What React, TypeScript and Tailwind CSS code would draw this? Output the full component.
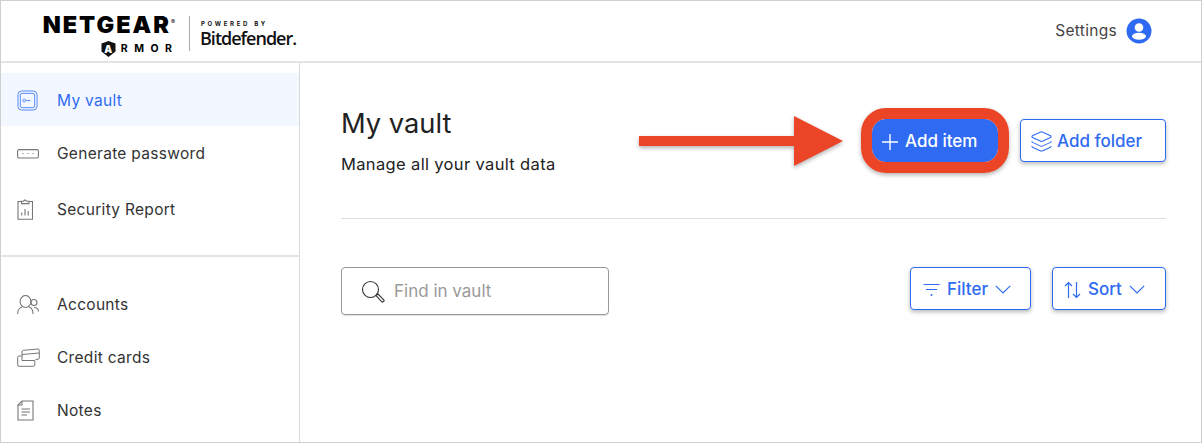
import { Layers } from 'lucide-react';
import type { ReactNode } from 'react';

const sans = "font-['Inter',sans-serif]";

function VaultIcon() {
  return (
    <svg width="21" height="21" viewBox="0 0 22 22" fill="none" stroke="#4f85f5">
      <rect x="1" y="1" width="20" height="20" rx="4" strokeWidth="1" />
      <rect x="3.5" y="3.5" width="15" height="15" rx="2" strokeWidth="1" />
      <circle cx="7.5" cy="11" r="1.5" strokeWidth="0.9" />
      <path d="M9 11h5M12.5 11v1" strokeWidth="0.9" />
    </svg>
  );
}

function PasswordIcon() {
  return (
    <svg width="22" height="10" viewBox="0 0 22 10" fill="none" stroke="#777">
      <rect x="0.6" y="0.6" width="20.8" height="8.4" rx="1.5" strokeWidth="1.1" />
      <path d="M5.5 4.5h1M10.5 4.5h1M15.5 4.5h1" strokeWidth="1.1" />
    </svg>
  );
}

function ReportIcon() {
  return (
    <svg width="16" height="21" viewBox="0 0 16 21" fill="none" stroke="#777" strokeWidth="1.1">
      <path d="M4.5 2.5H1v17.8h14.5V2.5H12" />
      <path d="M4.5 4.6V2.2h2l1.2-1.2h.6l1.2 1.2H12v2.4z" />
      <path d="M4.8 16.5v-3M8 16.5V10M11.2 16.5v-4.5" />
    </svg>
  );
}

function AccountsIcon() {
  return (
    <svg width="22" height="20" viewBox="0 0 22 20" fill="none" stroke="#777" strokeWidth="1.1">
      <ellipse cx="8.5" cy="6.5" rx="5.4" ry="6" />
      <path d="M0.6 19c0-4 2.5-6.5 4.6-7M11.8 12c2.2.5 4.2 3 4.2 7" />
      <circle cx="17" cy="7.5" r="3" />
      <path d="M17 12.5c2.5 0 4.4 1.5 4.4 4" />
    </svg>
  );
}

function CardsIcon() {
  return (
    <svg width="23" height="19" viewBox="0 0 23 19" fill="none" stroke="#777" strokeWidth="1">
      <path d="M5 4Q5 2.500 6.500 2.300L21 1Q22.300.900 22.300 2.200V10Q22.300 11 21 11.200L18.500 11.500" />
      <path d="M5 4V12.500M5 6.500 22.300 5" />
      <path d="M4.500 8H2Q.7 8 .7 9.300V17Q.7 18.300 2 18.300H16.500Q17.800 18.300 17.800 17V12.500H5" />
    </svg>
  );
}

function NotesIcon() {
  return (
    <svg width="17" height="21" viewBox="0 0 17 21" fill="none" stroke="#777" strokeWidth="1.1">
      <path d="M5 1h11v19H1V5z" />
      <path d="M5 1v4H1" />
      <path d="M4.5 9H13M4.500 12H13M4.500 15h5.500" />
    </svg>
  );
}

function PlusIcon() {
  return (
    <svg width="18" height="18" viewBox="0 0 18 18" fill="none" stroke="currentColor" strokeWidth="1.4">
      <path d="M9 1v16M1 9h16" />
    </svg>
  );
}

function Chevron() {
  return (
    <svg width="16" height="9" viewBox="0 0 16 9" fill="none" stroke="currentColor" strokeWidth="1.2">
      <path d="M0.8 0.8 8 8l7.2-7.2" />
    </svg>
  );
}

function SortIcon() {
  return (
    <svg width="17" height="18" viewBox="0 0 17 18" fill="none" stroke="currentColor" strokeWidth="1.2">
      <path d="M4.500 17V1.500M1 5l3.500-3.500L8 5" />
      <path d="M12.500 1v15.500M9 13l3.500 3.500L16 13" />
    </svg>
  );
}

function FilterIcon() {
  return (
    <svg width="17" height="14" viewBox="0 0 17 14" fill="none" stroke="currentColor" strokeWidth="1.2">
      <path d="M0.500 1.500h16M3 6.500h11" />
      <circle cx="8.500" cy="12" r="1" fill="currentColor" stroke="none" />
    </svg>
  );
}

function SearchIcon() {
  return (
    <svg width="24" height="24" viewBox="0 0 24 24" fill="none" stroke="#333" strokeWidth="1.1" className="mr-[9px]">
      <circle cx="9.500" cy="9.500" r="8" />
      <path d="M15 15.500l2-1.500 6 6c.6.800-1 2.500-2 2z" />
    </svg>
  );
}

function UserBadge() {
  return (
    <svg width="26" height="26" viewBox="0 0 26 26">
      <circle cx="13" cy="13" r="12.500" fill="#2f6bf2" />
      <circle cx="13" cy="9.500" r="4.300" fill="#fff" />
      <ellipse cx="13" cy="18.200" rx="7" ry="3.500" fill="#fff" />
    </svg>
  );
}

function Logo() {
  return (
    <div className="flex items-start pl-[43px] pt-[13px] self-start">
      <div className="flex flex-col items-end w-[132px] text-black leading-none">
        <div className="flex items-start leading-[22px]">
          <span className="text-[23.5px] font-black tracking-[2px]">NETGEAR</span>
          <span className="text-[6px] leading-[10px] mt-[3px] mr-[1px]">®</span>
        </div>
        <div className="flex items-center mt-[5px] pr-[4px]">
          <div className="relative w-[15px] h-[16px] mr-[5px]">
            <svg width="15" height="16" viewBox="0 0 15 16">
              <path d="M0.500 2.500 7.500 0l7 2.500v8L7.500 16l-7-5.500z" fill="#111" />
            </svg>
            <span className="absolute inset-0 flex items-center justify-center text-white text-[10px] font-black">A</span>
          </div>
          <span className="text-[10.5px] font-bold tracking-[6.5px] mr-[-6.5px]">RMOR</span>
        </div>
      </div>
      <div className="w-px h-[35px] bg-[#aaa] ml-[13px] mr-[10px] mt-[2px]" />
      <div className="flex flex-col text-[#111] mt-[6px]">
        <span className="text-[6px] font-bold tracking-[2.7px] leading-[8px] whitespace-nowrap ml-px">POWERED BY</span>
        <span className="text-[18px] font-semibold tracking-[-1px] leading-[20px] font-['Open_Sans',sans-serif]">Bitdefender.</span>
      </div>
    </div>
  );
}

function NavItem({ icon, label, active, rowClass }: { icon: ReactNode; label: string; active?: boolean; rowClass: string }) {
  return (
    <div className={`flex items-center ${rowClass} ${active ? 'bg-[#f3f7ff] text-[#2f6bf2]' : 'text-[#333]'}`}>
      <div className="w-[56px] pl-[16px] flex items-center shrink-0">{icon}</div>
      <span className="text-[15.5px] tracking-[0.3px]">{label}</span>
    </div>
  );
}

function OutlineButton({ children, className }: { children: ReactNode; className: string }) {
  return (
    <button className={`flex items-center justify-start h-[43px] pt-[2px] bg-white border border-[#2f6bf2] rounded-[4px] text-[#2f6bf2] text-[17px] font-medium shadow-[0_2px_4px_rgba(0,0,0,0.28)] ${className}`}>
      {children}
    </button>
  );
}

export default function App() {
  return (
    <div className={`w-[1202px] h-[443px] overflow-hidden bg-white border border-[#cfcfcf] flex flex-col ${sans}`}>
      <header className="h-[62px] shrink-0 border-b-2 border-[#e4e4e4] flex items-center justify-between">
        <Logo />
        <div className="flex items-center gap-[9px] pr-[49px] text-[#444] text-[15.5px] tracking-[0.3px]">
          Settings
          <UserBadge />
        </div>
      </header>

      <div className="flex flex-1 min-h-0">
        <aside className="w-[299px] shrink-0 border-r border-[#d9d9d9] flex flex-col pt-[10px]">
          <NavItem active rowClass="h-[53px] pt-[2px]" icon={<VaultIcon />} label="My vault" />
          <NavItem rowClass="h-[55px] pt-px" icon={<PasswordIcon />} label="Generate password" />
          <NavItem rowClass="h-[55px] pt-[2px]" icon={<ReportIcon />} label="Security Report" />
          <div className="mt-[19px] mb-[21px] h-[2px] bg-[#e4e4e4] shrink-0" />
          <NavItem rowClass="h-[53px]" icon={<AccountsIcon />} label="Accounts" />
          <NavItem rowClass="h-[53px]" icon={<CardsIcon />} label="Credit cards" />
          <NavItem rowClass="h-[53px]" icon={<NotesIcon />} label="Notes" />
        </aside>

        <main className="flex-1 pl-[41px] pr-[35px] pt-[43px]">
          <div className="relative flex items-start justify-between h-[113px] border-b border-[#dcdcdc]">
            <div>
              <h1 className="text-[27.3px] font-normal text-[#222] leading-[36px]">My vault</h1>
              <p className="mt-[11px] text-[16.5px] text-[#222] tracking-[0.35px] leading-[22px]">Manage all your vault data</p>
            </div>
            <div className="flex items-center gap-[22px] mt-[13px]">
              <div className="relative">
                <button className="flex items-center gap-[6px] w-[126px] h-[43px] pl-[9px] pt-[2px] bg-[#2f6bf2] rounded-[14px] text-white text-[17px] font-medium">
                  <PlusIcon />
                  Add item
                </button>
                {/* red annotation ring */}
                <div className="absolute -inset-[11px] border-[11px] border-[#ec4426] rounded-[25px] shadow-[0_2px_4px_rgba(0,0,0,0.3)]" />
              </div>
              <OutlineButton className="w-[146px] pl-[9px] gap-[4px]">
                <Layers size={23} strokeWidth={1.1} />
                Add folder
              </OutlineButton>
            </div>
            {/* annotation arrow */}
            <svg className="absolute left-[298px] top-[10px] drop-shadow-[0_2px_2px_rgba(0,0,0,0.3)]" width="204" height="50" viewBox="0 0 204 50">
              <path d="M0 20h155V0l49 25-49 25V30H0z" fill="#ec4426" />
            </svg>
          </div>

          <div className="flex items-start justify-between mt-[48px]">
            <div className="flex items-center w-[268px] h-[48px] border border-[#999] rounded-[4px] pl-[19px] pt-[2px] shadow-[0_1px_1px_rgba(0,0,0,0.12)]">
              <SearchIcon />
              <span className="text-[17px] text-[#999]">Find in vault</span>
            </div>
            <div className="flex items-center gap-[21px]">
              <OutlineButton className="w-[121px] pl-[12px] gap-[7px]">
                <FilterIcon />
                Filter
                <Chevron />
              </OutlineButton>
              <OutlineButton className="w-[114px] pl-[11px] gap-[7px]">
                <SortIcon />
                Sort
                <Chevron />
              </OutlineButton>
            </div>
          </div>
        </main>
      </div>
    </div>
  );
}
